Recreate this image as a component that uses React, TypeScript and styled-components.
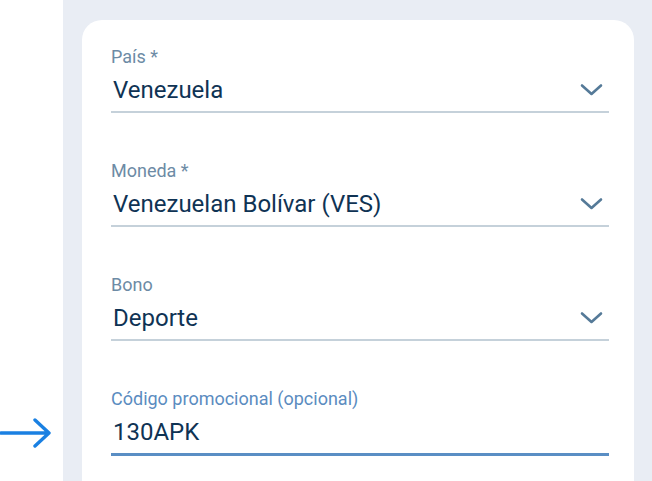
import React from "react";
import styled, { createGlobalStyle } from "styled-components";

const GlobalStyle = createGlobalStyle`
  html, body {
    margin: 0;
    padding: 0;
    background: #ffffff;
    font-family: Roboto, "Liberation Sans", sans-serif;
  }
`;

const Page = styled.div`
  display: flex;
  height: 481px;
  overflow: hidden;
`;

const Gutter = styled.div`
  width: 63px;
  flex-shrink: 0;
  display: flex;
  flex-direction: column;
  justify-content: flex-end;
  padding-bottom: 32px;
  box-sizing: border-box;
`;

const Panel = styled.div`
  flex: 1;
  background: #e9edf4;
  padding: 20px 18px 0 19px;
`;

const Card = styled.div`
  background: #ffffff;
  border-radius: 20px 20px 0 0;
  padding: 27px 25px 40px 29px;
  display: flex;
  flex-direction: column;
  gap: 48px;
  min-height: 520px;
  box-sizing: border-box;
`;

const Field = styled.div`
  display: flex;
  flex-direction: column;
`;

const Label = styled.div<{ $active?: boolean }>`
  font-size: 18px;
  line-height: 20px;
  color: ${(p) => (p.$active ? "#5b8cbf" : "#6d8ba5")};
  margin-bottom: 9px;
`;

const Control = styled.div<{ $active?: boolean }>`
  display: flex;
  align-items: center;
  justify-content: space-between;
  padding: 0 6px ${(p) => (p.$active ? "7px" : "7px")} 2px;
  border-bottom: ${(p) => (p.$active ? "3px solid #5a8ec4" : "2px solid #c5d1da")};
`;

const Value = styled.span`
  font-size: 24px;
  line-height: 28px;
  color: #0f3354;
`;

const Chevron = () => (
  <svg width="23" height="14" viewBox="0 0 23 14" fill="none">
    <path d="M2 2.5 L11.5 11 L21 2.5" stroke="#557a98" strokeWidth="2.6" strokeLinecap="round" strokeLinejoin="round" />
  </svg>
);

const Arrow = () => (
  <svg width="52" height="32" viewBox="0 0 52 32" fill="none">
    <path d="M1 16 H48 M35 3 L49 16 L35 29" stroke="#1a80e2" strokeWidth="3.4" strokeLinecap="round" strokeLinejoin="round" />
  </svg>
);

const fields = [
  { label: "País *", value: "Venezuela", select: true },
  { label: "Moneda *", value: "Venezuelan Bolívar (VES)", select: true },
  { label: "Bono", value: "Deporte", select: true },
  { label: "Código promocional (opcional)", value: "130APK", select: false },
];

export default function App() {
  return (
    <>
      <GlobalStyle />
      <Page>
        <Gutter>
          <Arrow />
        </Gutter>
        <Panel>
          <Card>
            {fields.map((f) => (
              <Field key={f.label}>
                <Label $active={!f.select}>{f.label}</Label>
                <Control $active={!f.select}>
                  <Value>{f.value}</Value>
                  {f.select && <Chevron />}
                </Control>
              </Field>
            ))}
          </Card>
        </Panel>
      </Page>
    </>
  );
}
